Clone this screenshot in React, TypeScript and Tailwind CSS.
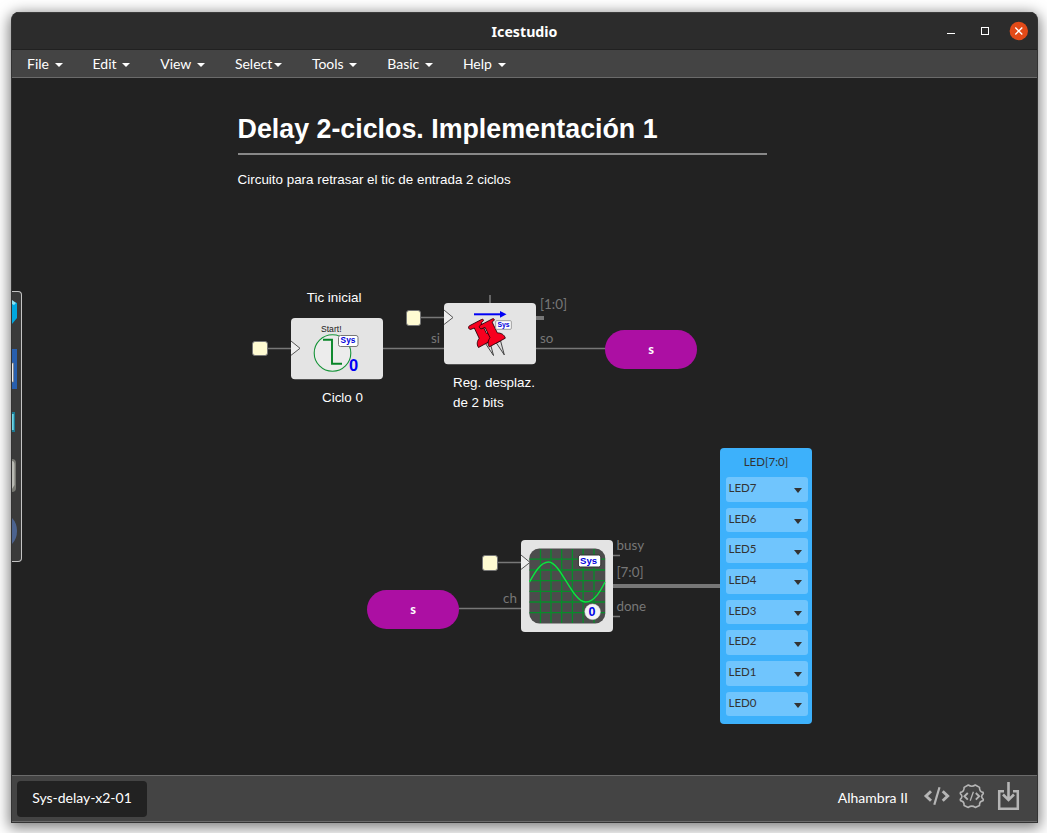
import type { ReactNode } from 'react'

const menus = [
  { name: 'File', gap: 'ml-[5.6px]' },
  { name: 'Edit', gap: 'ml-[5.6px]' },
  { name: 'View', gap: 'ml-[5.6px]' },
  { name: 'Select', gap: 'ml-[1.6px]' },
  { name: 'Tools', gap: 'ml-[5.6px]' },
  { name: 'Basic', gap: 'ml-[5.6px]' },
  { name: 'Help', gap: 'ml-[5.6px]' },
]

const leds = ['LED7', 'LED6', 'LED5', 'LED4', 'LED3', 'LED2', 'LED1', 'LED0']

function TitleBar() {
  return (
    <header className="grid h-[38px] shrink-0 grid-cols-[97px_1fr_97px] items-center border-t border-b border-t-[#3c3c3c] border-b-[#212121] bg-[#2c2c2c] text-white">
      <h1 className="col-start-2 pt-0.5 text-center font-['Noto_Sans',sans-serif] text-[14.2px] leading-5 font-bold">Icestudio</h1>
      <svg width="97" height="24" viewBox="940 19 97 24" fill="none">
        <path d="M947 33.5h8" stroke="#fff" />
        <rect x="981.5" y="27.5" width="7" height="7" stroke="#fff" />
        <circle cx="1018.8" cy="31" r="9.2" fill="#e24a18" />
        <path d="M1015.3 27.5l7 7M1022.3 27.5l-7 7" stroke="#fff" strokeWidth="1.4" />
      </svg>
    </header>
  )
}

function MenuBar() {
  return (
    <nav className="flex h-[28px] shrink-0 items-center border-b border-[#6b6b6b] bg-[#444] text-[14px] text-white">
      {menus.map((m) => (
        <button key={m.name} className="flex h-full items-center px-[15px] leading-5">
          {m.name}
          <span className={`${m.gap} mt-0.5 h-0 w-0 border-x-4 border-t-4 border-x-transparent border-t-white`} />
        </button>
      ))}
    </nav>
  )
}

function Wires() {
  return (
    <svg className="absolute inset-0" width="1025" height="697" viewBox="12 78 1025 697" fill="none" stroke="#777">
      <path d="M267 348.5h24M383 348.5h61M536 348.5h70M421 317.5h23M490 295v9M497 562.5h24M459 608.5h62M613 555.5h7M613 616.5h7" strokeWidth="1.6" />
      <path d="M536 317.9h8M613 585.9h107" strokeWidth="4" />
    </svg>
  )
}

function Port({ className }: { className: string }) {
  return <div className={`absolute h-[15.5px] w-[15.5px] rounded-[3px] border border-[#777] bg-[#fffbd2] ${className}`} />
}

function Label({ className, children }: { className: string; children: ReactNode }) {
  return <span className={`absolute text-[13.4px] leading-4 whitespace-nowrap text-[#777] ${className}`}>{children}</span>
}

function Note({ className, children }: { className: string; children: ReactNode }) {
  return (
    <p className={`absolute font-['Liberation_Sans',sans-serif] text-[13.4px] leading-5 whitespace-nowrap text-white ${className}`}>
      {children}
    </p>
  )
}

function Bus({ className }: { className: string }) {
  return (
    <div className={`absolute flex h-[38.5px] w-[92px] items-center justify-center rounded-full bg-[#ac0fa3] text-[13px] font-bold text-white ${className}`}>
      s
    </div>
  )
}

function StartBlock() {
  return (
    <svg className="absolute top-[240px] left-[279px]" width="92" height="61.5" viewBox="291 318 92 61.5" fill="none" fontFamily="Liberation Sans, sans-serif">
      <rect x="291" y="318" width="92" height="61.3" rx="4" fill="#e4e4e4" />
      <path d="M291 341l9 7.3-9 7" fill="#eee" stroke="#555" />
      <text x="321" y="332" fontSize="8.6" fill="#1a1a1a">Start!</text>
      <circle cx="332.5" cy="353" r="18.3" fill="#ececec" stroke="#149337" strokeWidth="1.1" />
      <path d="M323 339.7h9v24h10" stroke="#078527" strokeWidth="1.9" />
      <rect x="338.5" y="335.5" width="19.5" height="11" rx="2" fill="#fff" stroke="#777" />
      <text x="340.6" y="343.3" fontSize="8.3" fontWeight="700" fill="#0000dc">Sys</text>
      <text x="349" y="371" fontSize="16.5" fontWeight="700" fill="#0000f5">0</text>
    </svg>
  )
}

function Pin({ transform }: { transform?: string }) {
  return (
    <g transform={transform} stroke="#270008" strokeWidth=".9" strokeLinejoin="round">
      <path d="M485.5 343.5l8 12-3.7-14z" fill="#ddd" stroke="#333" />
      <path
        d="M468.5 327.5c0-1 .5-1.5 1.5-2l11.5-6c1-.5 2 0 2 .8s-1 1.4-2.2 2.4l5.2 10.8c3.5 0 7 1.5 8 5.3l-16 8.7c-2.2-3.5-1.2-6.5.7-9.2l-4.9-10.3-3.3 1.3c-1.2.5-2.3-.5-2.5-1.8z"
        fill="#f7001f"
      />
    </g>
  )
}

function RegisterBlock() {
  return (
    <svg className="absolute top-[225px] left-[432px]" width="92" height="61.5" viewBox="444 303 92 61.5" fill="none" fontFamily="Liberation Sans, sans-serif">
      <rect x="444" y="303" width="92" height="61.3" rx="4" fill="#e4e4e4" />
      <path d="M444 310l9 7.5-9 7" fill="#eee" stroke="#555" />
      <path d="M474 314.3h28" stroke="#0000f5" strokeWidth="2" />
      <path d="M500 311l6.5 3.3-6.5 3.4z" fill="#0000f5" />
      <Pin />
      <Pin transform="translate(10.8 -.6)" />
      <rect x="495.7" y="320.7" width="15.6" height="8.6" rx="1" fill="#fff" stroke="#888" strokeWidth=".8" />
      <text x="497.4" y="327.2" fontSize="6.8" fontWeight="700" fill="#0000dc">Sys</text>
    </svg>
  )
}

function ScopeBlock() {
  return (
    <svg className="absolute top-[462px] left-[509px]" width="92" height="92" viewBox="521 540 92 92" fill="none" fontFamily="Liberation Sans, sans-serif">
      <rect x="521" y="540" width="92" height="92" rx="4" fill="#e4e4e4" />
      <rect x="529.3" y="548.5" width="76" height="75" rx="10" fill="#4c4c4c" />
      <path d="M540.5 549v74M551 549v74M561.7 549v74M572.4 549v74M583.1 549v74M594 549v74M529.5 559.2h75.5M529.5 570h75.5M529.5 580.7h75.5M529.5 591.4h75.5M529.5 602h75.5M529.5 612.7h75.5" stroke="#078c2a" strokeWidth="1.3" />
      <path d="M529.5 582c5-9 11-20 19-20 12 0 24 40 37 40 9 0 15-11 19.5-20" stroke="#0be53f" strokeWidth="1.4" />
      <path d="M521 555l9 7.4-9 7" fill="#eee" stroke="#555" />
      <rect x="578.4" y="555" width="22.4" height="12" rx="2" fill="#fff" stroke="#333" />
      <text x="580" y="563.8" fontSize="9.6" fontWeight="700" fill="#0000dc">Sys</text>
      <circle cx="592.6" cy="611.8" r="7.8" fill="#f3f3f3" stroke="#ddd" strokeWidth=".5" />
      <text x="588.6" y="616" fontSize="12.5" fontWeight="700" fill="#0000e5">0</text>
    </svg>
  )
}

function LedBlock() {
  return (
    <div className="absolute top-[370px] left-[708px] flex h-[276px] w-[92px] flex-col rounded-[4px] bg-[#3db1fb] px-[4px] pl-[5.5px] text-[11.5px] leading-4 text-[#333]">
      <h3 className="h-[29px] pt-[6px] pr-[1.5px] text-center">LED[7:0]</h3>
      <ul className="flex flex-col gap-[6.1px]">
        {leds.map((led) => (
          <li key={led} className="flex h-[24.6px] items-center justify-between rounded-[3px] bg-[#70c5fd] pr-[6.5px] pl-[3px]">
            <span className="pb-[2.6px]">{led}</span>
            <span className="mt-[3px] h-0 w-0 border-x-4 border-t-5 border-x-transparent border-t-[#333]" />
          </li>
        ))}
      </ul>
    </div>
  )
}

function Toolbox() {
  return (
    <aside className="absolute top-[213px] left-0 h-[271px] w-[10px] overflow-hidden rounded-r-[4px] border-y border-r border-[#c4c4c4] bg-[#3a3a3a]">
      <svg width="9" height="269" viewBox="12 292 9 269">
        <path d="M12 301l5 2v15l-5 6z" fill="#00a7df" />
        <path d="M12 300l4 3-2 2-2-1z" fill="#8de4f5" />
        <path d="M12 349h5v40h-5z" fill="#285fae" />
        <path d="M11 363h2.5v19H11z" fill="#eee" stroke="#777" strokeWidth=".7" />
        <path d="M12 412h3v20h-3z" fill="#1c7991" />
        <path d="M12 414h1.7v16H12z" fill="#6ed6e7" />
        <path d="M12 459q4 0 4 4v25q0 4-4 4z" fill="#777872" />
        <path d="M12 461q2.5 0 2.5 4v20l-2.5 4z" fill="#b9bab4" />
        <path d="M12 518q5 5 5 13t-5 13z" fill="#4c638f" />
      </svg>
    </aside>
  )
}

function Heading() {
  return (
    <section className="mt-[34px] ml-[225.6px] w-[529px] font-['Liberation_Sans',sans-serif] text-white">
      <h2 className="border-b-2 border-[#888] pb-[7px] text-[26.8px] leading-[34px] font-bold whitespace-nowrap">Delay 2-ciclos. Implementación 1</h2>
      <p className="mt-[15px] text-[13.4px] leading-5">Circuito para retrasar el tic de entrada 2 ciclos</p>
    </section>
  )
}

function Canvas() {
  return (
    <main className="relative flex flex-1 flex-col overflow-hidden bg-[#222]">
      <Heading />
      <Wires />
      <Port className="top-[262.5px] left-[240px]" />
      <Port className="top-[232px] left-[393.5px]" />
      <Port className="top-[477px] left-[470px]" />
      <Note className="top-[210px] left-[294.8px]">Tic inicial</Note>
      <Note className="top-[310px] left-[310px]">Ciclo 0</Note>
      <Note className="top-[295px] left-[441px]">
        Reg. desplaz.
        <br />
        de 2 bits
      </Note>
      <Label className="top-[252px] left-[419px]">si</Label>
      <Label className="top-[252px] left-[528px]">so</Label>
      <Label className="top-[218px] left-[528px]">[1:0]</Label>
      <Label className="top-[512px] left-[491px]">ch</Label>
      <Label className="top-[459px] left-[604.5px]">busy</Label>
      <Label className="top-[486px] left-[604.5px]">[7:0]</Label>
      <Label className="top-[520px] left-[604.5px]">done</Label>
      <StartBlock />
      <RegisterBlock />
      <ScopeBlock />
      <Bus className="top-[252.2px] left-[593px]" />
      <Bus className="top-[512.2px] left-[355px]" />
      <LedBlock />
      <Toolbox />
    </main>
  )
}

function Footer() {
  return (
    <footer className="flex h-[47px] shrink-0 items-start border-y border-[#6b6b6b] bg-[#444] text-[14px] text-white">
      <div className="mt-[5px] ml-[5px] flex h-[36px] w-[130px] items-center justify-center rounded-[4px] bg-[#222] pb-0.5 leading-5">Sys-delay-x2-01</div>
      <div className="mt-[12px] ml-auto leading-5">Alhambra II</div>
      <svg className="ml-[14px]" width="115" height="43" viewBox="922 776 115 43" fill="none" stroke="#b5b5b5">
        <path d="M931 791.2l-5 4.8 5 4.8M942.7 791.2l5 4.8-5 4.8" strokeWidth="2.9" />
        <path d="M939.5 787.2l-5.2 17.6" strokeWidth="2.2" />
        <path
          d="M968.3 785q3.5 2.6 7 0l4.2 2.4q-.3 4.3 3.6 5l.2 1.2q-3.3 2.9 0 5.8l-.2 1.2q-3.9.7-3.6 5l-4.2 1.8q-3.5-2.6-7 0l-4.2-1.8q.3-4.3-3.6-5l-.2-1.2q3.3-2.9 0-5.8l.2-1.2q3.9-.7 3.6-5z"
          strokeWidth="1.6"
          strokeLinejoin="round"
        />
        <path d="M967.8 793l-3.4 3.3 3.4 3.3M975.8 793l3.4 3.3-3.4 3.3" strokeWidth="1.9" />
        <path d="M973.4 791.8l-3.2 9" strokeWidth="1.3" />
        <path d="M1004 791.3h-4.8v17.5h18.6v-17.5h-4.8" strokeWidth="2.5" />
        <path d="M1008.5 782v18M1003 794.5l5.5 5.5 5.5-5.5" strokeWidth="2.6" />
      </svg>
    </footer>
  )
}

export default function App() {
  return (
    <div className="h-[833px] w-[1047px] overflow-hidden bg-white pt-[12px] pl-[11px] font-['Lato',sans-serif]">
      <div className="flex h-[811px] w-[1027px] flex-col overflow-hidden rounded-t-[8px] border-x border-b border-[#333] bg-[#2c2c2c] shadow-[0_3px_14px_2px_rgba(0,0,0,0.5)]">
        <TitleBar />
        <MenuBar />
        <Canvas />
        <Footer />
      </div>
    </div>
  )
}
